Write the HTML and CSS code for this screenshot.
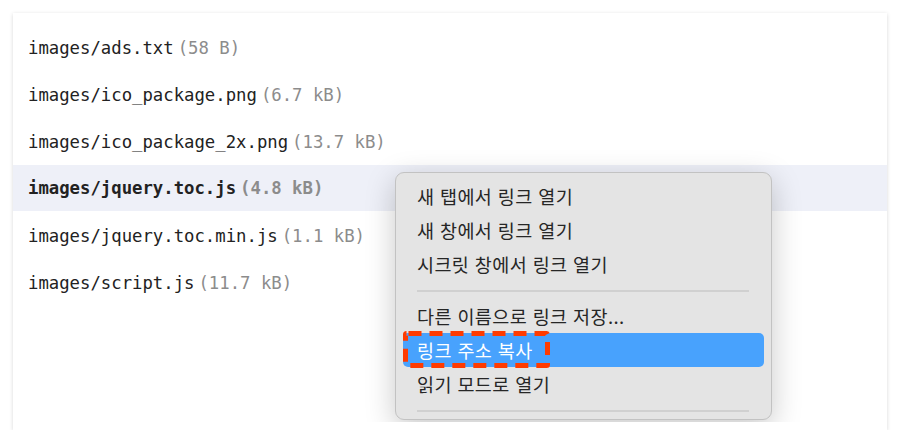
FILE: index.html
```html
<!DOCTYPE html>
<html lang="ko">
<head>
<meta charset="utf-8">
<link rel="stylesheet" href="styles.css">
</head>
<body>
<div class="card">
  <div class="clip">
    <ul class="files">
      <li class="row"><span class="name">images/ads.txt</span><span class="size">(58 B)</span></li>
      <li class="row"><span class="name">images/ico_package.png</span><span class="size">(6.7 kB)</span></li>
      <li class="row"><span class="name">images/ico_package_2x.png</span><span class="size">(13.7 kB)</span></li>
      <li class="row active"><span class="name">images/jquery.toc.js</span><span class="size">(4.8 kB)</span></li>
      <li class="row"><span class="name">images/jquery.toc.min.js</span><span class="size">(1.1 kB)</span></li>
      <li class="row"><span class="name">images/script.js</span><span class="size">(11.7 kB)</span></li>
    </ul>
    <div class="menu">
      <div class="item">새 탭에서 링크 열기</div>
      <div class="item">새 창에서 링크 열기</div>
      <div class="item">시크릿 창에서 링크 열기</div>
      <div class="sep"></div>
      <div class="item">다른 이름으로 링크 저장...</div>
      <div class="item selected">링크 주소 복사<svg class="mark" width="147" height="37" viewBox="0 0 147 37"><rect x="2.5" y="2.5" width="142" height="32" rx="1" fill="none" stroke="#ff3b00" stroke-width="5" stroke-dasharray="13 8" stroke-dashoffset="-2"/></svg></div>
      <div class="item">읽기 모드로 열기</div>
      <div class="sep"></div>
    </div>
  </div>
</div>
</body>
</html>
```
FILE: styles.css
```css
html, body {
  margin: 0;
  padding: 0;
  background: #ffffff;
}
body {
  padding: 13px 13px 0 13px;
}
.card {
  width: 874px;
  background: #ffffff;
  box-shadow: 0 1px 4px rgba(0, 0, 0, 0.16);
  padding-bottom: 8px;
}
.clip {
  position: relative;
  height: 409px;
  overflow: hidden;
}
.files {
  list-style: none;
  margin: 0;
  padding: 11px 0 0 0;
}
.row {
  height: 47px;
  display: flex;
  align-items: center;
  padding-left: 15px;
  font-family: "DejaVu Sans Mono", monospace;
  font-size: 17.3px;
  color: #222222;
}
.row.active {
  height: 46px;
  margin-bottom: 1px;
  background: #eef0f8;
  font-weight: bold;
}
.size {
  margin-left: 4px;
  color: #8c8c8c;
}
.menu {
  position: absolute;
  left: 382px;
  top: 159px;
  width: 361px;
  padding: 6px 7px 0 7px;
  background: #e4e4e4;
  border: 1px solid #c2c2c2;
  border-radius: 9px;
  box-shadow: 0 8px 30px rgba(0, 0, 0, 0.22);
  font-family: "Noto Sans CJK KR", "Noto Sans", sans-serif;
  font-size: 18.5px;
  letter-spacing: 0.4px;
  color: #262626;
}
.item {
  position: relative;
  height: 34px;
  line-height: 34px;
  padding-left: 14px;
  border-radius: 5px;
}
.item.selected {
  background: #48a2fd;
  color: #ffffff;
}
.mark {
  position: absolute;
  left: 0;
  top: -2px;
}
.sep {
  height: 2px;
  margin: 9px 15px 7px 14px;
  background: #d0d0d0;
}
```
